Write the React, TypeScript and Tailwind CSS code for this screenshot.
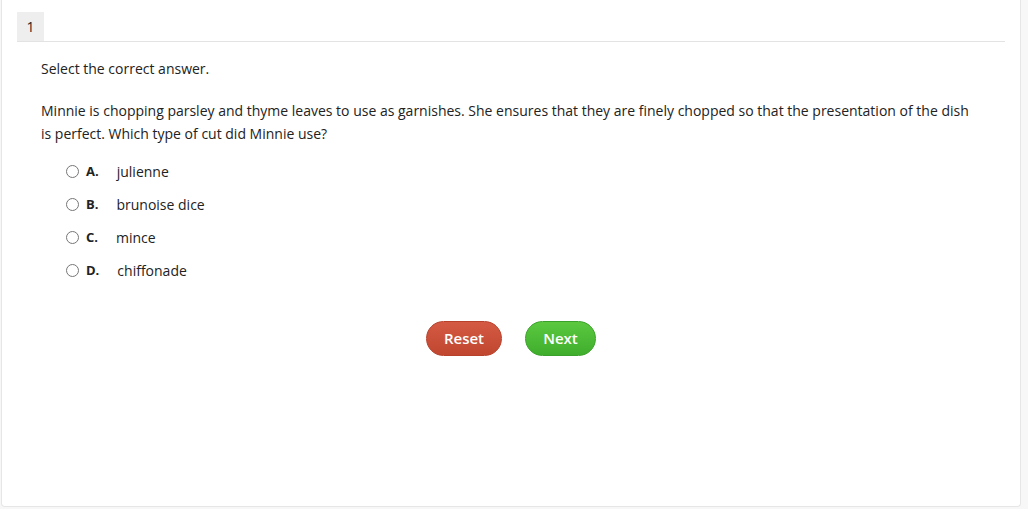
import React from "react";

const options = [
  { l: "A.", t: "julienne" },
  { l: "B.", t: "brunoise dice" },
  { l: "C.", t: "mince" },
  { l: "D.", t: "chiffonade" },
];

export default function App() {
  return (
    <div className="w-[1028px] h-[509px] bg-[#f7f7f7] overflow-hidden" style={{ fontFamily: '"Open Sans", sans-serif' }}>
      <div className="ml-[1px] w-[1020px] h-[507px] bg-white border border-[#e6e6e6] border-t-0 rounded-b-[4px] pt-[12px] px-[15px]">
        <div className="border-b border-[#e3e3e3] flex">
          <div className="w-[27px] h-[29px] bg-[#eeeeee] flex items-center justify-center text-[14px] text-[#222]">1</div>
        </div>
        <div className="pl-[24px] pr-[30px] text-[14px] text-[#222] leading-[23px]">
          <p className="mt-[15px]">Select the correct answer.</p>
          <p className="mt-[19px]">
            Minnie is chopping parsley and thyme leaves to use as garnishes. She ensures that they are finely chopped so that the presentation of the dish is perfect. Which type of cut did Minnie use?
          </p>
          <div className="mt-[15px] pl-[25px] flex flex-col gap-[10px]">
            {options.map((o) => (
              <label key={o.l} className="flex items-center h-[23px]">
                <input type="radio" name="q" className="w-[13px] h-[13px] m-0 mr-[7px] accent-gray-600" />
                <span className="font-bold text-[13px] mr-[18px]">{o.l}</span>
                <span>{o.t}</span>
              </label>
            ))}
          </div>
        </div>
        <div className="flex justify-center gap-[23px] mt-[39px]">
          <button className="w-[76px] h-[35px] rounded-full bg-gradient-to-b from-[#d45a44] to-[#c0462f] text-white text-[15px] font-semibold border border-[#b8412c]">Reset</button>
          <button className="w-[71px] h-[35px] rounded-full bg-gradient-to-b from-[#5bc840] to-[#3fae2c] text-white text-[15px] font-semibold border border-[#3aa22a]">Next</button>
        </div>
      </div>
    </div>
  );
}
